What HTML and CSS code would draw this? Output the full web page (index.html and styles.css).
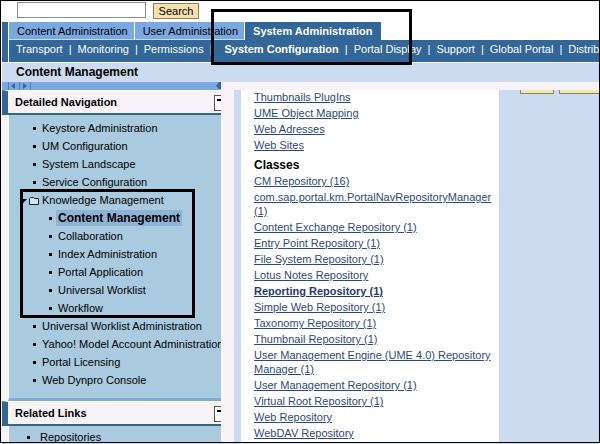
FILE: index.html
```html
<!DOCTYPE html>
<html lang="en">
<head>
  <meta charset="UTF-8" />
  <meta name="viewport" content="width=device-width, initial-scale=1" />
  <title>Content Management</title>
  <link rel="stylesheet" href="styles.css">
</head>
<body>
  <div class="portal">
    <form class="search">
      <input type="text" class="search-text" aria-label="Search" />
      <button type="button" class="search-button">Search</button>
    </form>

    <nav class="top-nav">
      <div class="tabs">
        <a href="#" class="tab">Content Administration</a>
        <a href="#" class="tab">User Administration</a>
        <a href="#" class="tab active">System Administration</a>
      </div>
      <div class="sub-tabs">
        <a href="#">Transport</a>
        <a href="#">Monitoring</a>
        <a href="#">Permissions</a>
        <a href="#" class="active">System Configuration</a>
        <a href="#">Portal Display</a>
        <a href="#">Support</a>
        <a href="#">Global Portal</a>
        <a href="#">Distrib</a>
      </div>
    </nav>

    <h1 class="page-title">Content Management</h1>

    <div class="columns">
      <!-- Left column -->
      <aside class="sidebar">
        <div class="history">
          <svg width="24" height="8" viewBox="0 0 24 8">
            <path d="M0.5 0V8M11.5 0V8M22.5 0V8" stroke="#4c7fb8" />
            <path d="M7 1V7L3 4ZM15 1V7L19 4Z" fill="#336699" />
          </svg>
          <svg width="5" height="8" viewBox="0 0 5 8">
            <path d="M5 0V7H3L0 4L3 0Z" fill="#336699" />
          </svg>
        </div>

        <div class="panel-header">
          <h2>Detailed Navigation</h2>
          <button type="button" class="toggle" aria-label="Collapse"></button>
        </div>
        <ul class="tree">
          <li><a href="#">Keystore Administration</a></li>
          <li><a href="#">UM Configuration</a></li>
          <li><a href="#">System Landscape</a></li>
          <li><a href="#">Service Configuration</a></li>
          <li class="folder">
            <svg class="folder-icon" width="22" height="10" viewBox="0 0 22 10">
              <path d="M0 3H7L3 7Z" fill="#000" />
              <path d="M9.5 8.5V2.5L10.5 1.5H13.5L14.5 2.5H18.5V8.5Z" fill="#d3e4ef" stroke="#222" />
            </svg><a href="#">Knowledge Management</a>
            <ul>
              <li><a href="#" class="selected">Content Management</a></li>
              <li><a href="#">Collaboration</a></li>
              <li><a href="#">Index Administration</a></li>
              <li><a href="#">Portal Application</a></li>
              <li><a href="#">Universal Worklist</a></li>
              <li><a href="#">Workflow</a></li>
            </ul>
          </li>
          <li><a href="#">Universal Worklist Administration</a></li>
          <li><a href="#">Yahoo! Model Account Administration</a></li>
          <li><a href="#">Portal Licensing</a></li>
          <li><a href="#">Web Dynpro Console</a></li>
        </ul>

        <div class="panel-header">
          <h2>Related Links</h2>
          <button type="button" class="toggle" aria-label="Collapse"></button>
        </div>
        <ul class="tree related">
          <li><a href="#">Repositories</a></li>
        </ul>
      </aside>

      <!-- Right column -->
      <main class="content">
        <div class="link-list">
          <ul>
            <li><a href="#">Thumbnails PlugIns</a></li>
            <li><a href="#">UME Object Mapping</a></li>
            <li><a href="#">Web Adresses</a></li>
            <li><a href="#">Web Sites</a></li>
          </ul>
          <h3>Classes</h3>
          <ul>
            <li><a href="#">CM Repository (16)</a></li>
            <li><a href="#">com.sap.portal.km.PortalNavRepositoryManager (1)</a></li>
            <li><a href="#">Content Exchange Repository (1)</a></li>
            <li><a href="#">Entry Point Repository (1)</a></li>
            <li><a href="#">File System Repository (1)</a></li>
            <li><a href="#">Lotus Notes Repository</a></li>
            <li><a href="#" class="current">Reporting Repository (1)</a></li>
            <li><a href="#">Simple Web Repository (1)</a></li>
            <li><a href="#">Taxonomy Repository (1)</a></li>
            <li><a href="#">Thumbnail Repository (1)</a></li>
            <li><a href="#">User Management Engine (UME 4.0) Repository Manager (1)</a></li>
            <li><a href="#">User Management Repository (1)</a></li>
            <li><a href="#">Virtual Root Repository (1)</a></li>
            <li><a href="#">Web Repository</a></li>
            <li><a href="#">WebDAV Repository</a></li>
          </ul>
        </div>
        <div class="actions">
          <button type="button" aria-label="New"></button>
          <button type="button" class="wide" aria-label="Duplicate"></button>
        </div>
      </main>
    </div>

    <div class="marker marker-tab"></div>
    <div class="marker marker-tree"></div>
  </div>
</body>
</html>
```
FILE: styles.css
```css
* {
  box-sizing: border-box;
}

body {
  margin: 0;
  background: #ccdbef;
  font-family: "Liberation Sans", Arial, sans-serif;
  font-size: 11px;
  color: #000;
}

a {
  color: inherit;
  text-decoration: none;
}

ul {
  list-style: none;
  margin: 0;
  padding: 0;
}

h1,
h2,
h3 {
  margin: 0;
  font-size: 11px;
}

.portal {
  position: relative;
  display: flex;
  flex-direction: column;
  height: calc(100vh - 1px);
  border: 1px solid #000;
  background: #fff;
  overflow: hidden;
}

/* search row */
.search {
  display: flex;
  flex: none;
  gap: 7px;
  height: 21px;
  padding: 1px 0 3px 16px;
}

.search-text {
  width: 129px;
  height: 16px;
  padding: 0 2px;
  border: 1px solid #8c8c8c;
  font: inherit;
}

.search-button {
  width: 46px;
  height: 16px;
  margin-top: 1px;
  padding: 0;
  border: 1px solid #8f8158;
  background: #f5e0ae;
  font: inherit;
  line-height: 14px;
}

/* navigation */
.top-nav {
  flex: none;
  margin-left: 1px;
  border-left: 6px solid #336699;
  box-shadow: inset 1px 0 #fff;
}

.tabs,
.sub-tabs {
  display: flex;
  margin-left: 1px;
  white-space: nowrap;
}

.tab {
  height: 18px;
  padding: 0 6px 0 8px;
  border-right: 1px solid #fff;
  border-bottom: 1px solid #c5daf3;
  background: #7aa8e0;
  line-height: 18px;
}

.tab.active {
  padding-right: 8px;
  border-color: #336699;
  background: #336699;
  color: #fff;
  font-weight: bold;
}

.sub-tabs {
  height: 22px;
  padding-left: 7px;
  background: #336699;
  color: #fff;
  line-height: 19px;
}

.sub-tabs a + a::before {
  content: "|";
  padding: 0 6px;
  font-weight: normal;
}

.sub-tabs a.active {
  font-weight: bold;
}

.sub-tabs a.active::before {
  padding-right: 12px;
}

.page-title {
  flex: none;
  height: 20px;
  margin-left: 1px;
  padding-left: 14px;
  border-top: 1px solid #f4f3fa;
  background: #ccdbef;
  font-size: 12px;
  line-height: 19px;
}

.columns {
  display: flex;
  flex: 1;
  min-height: 0;
  background: #f8f3f8;
}

/* sidebar */
.sidebar {
  flex: none;
  width: 220px;
  padding-left: 1px;
  overflow: hidden;
}

.history {
  display: flex;
  justify-content: space-between;
  height: 8px;
  padding-left: 6px;
  background: #7aa8e0;
}

.panel-header {
  display: flex;
  justify-content: space-between;
  height: 25px;
  padding-left: 7px;
  border-top: 1px solid #fff;
  border-left: 6px solid #336699;
  border-bottom: 2px solid #336688;
  background: #f8f3f7;
  line-height: 22px;
}

.toggle {
  width: 7px;
  height: 16px;
  margin-top: 4px;
  padding: 0;
  border: 1px solid #555;
  border-right: 0;
  background: linear-gradient(#000, #000) 2px 3px / 4px 2px no-repeat #fff;
}

.tree {
  margin-left: 6px;
  padding: 4px 0 9px;
  border-left: 1px solid #fff;
  border-bottom: 3px solid #86a9d0;
  background: #a9cadf;
  line-height: 18px;
  white-space: nowrap;
}

.tree li {
  padding-left: 33px;
}

.tree li:not(.folder)::before {
  content: "";
  display: inline-block;
  width: 3px;
  height: 3px;
  margin: 0 6px 2px -9px;
  background: #000;
}

.tree .folder-icon {
  margin-left: -22px;
  vertical-align: middle;
}

.tree li li {
  padding-left: 16px;
}

.tree .selected {
  padding: 1px 2px;
  margin-left: -2px;
  background: #8fb3d6;
  font-size: 12px;
  font-weight: bold;
}

.tree.related {
  padding-top: 2px;
}

.tree.related li {
  padding-left: 31px;
}

.tree.related li::before {
  margin-left: -13px;
  margin-right: 10px;
}

/* content area */
.content {
  display: flex;
  flex: 1;
  align-items: stretch;
  min-width: 0;
  margin: 8px 0 0 13px;
  border-left: 7px solid #ccdbef;
  background: #ccdbef;
}

.link-list {
  flex: none;
  width: 258px;
  padding-left: 13px;
  background: #fff;
}

.link-list li {
  margin-bottom: 2px;
  line-height: 14px;
}

.link-list a {
  color: #2d4a78;
  text-decoration: underline;
}

.link-list .current {
  color: #1f3a70;
  font-weight: bold;
}

.link-list h3 {
  margin: 6px 0 1px;
  font-size: 12px;
  line-height: 15px;
}

.actions {
  display: flex;
  align-items: flex-start;
  flex: 1;
  gap: 5px;
  padding-left: 21px;
  overflow: hidden;
}

.actions button {
  flex: none;
  width: 34px;
  height: 4px;
  padding: 0;
  border: 1px solid #8f8158;
  border-top: 0;
  background: #f3e8b4;
}

.actions .wide {
  width: 60px;
}

/* highlight frames drawn over the page */
.marker {
  position: absolute;
  border: 3px solid #000;
  pointer-events: none;
}

.marker-tab {
  top: 8px;
  left: 210px;
  width: 201px;
  height: 56px;
}

.marker-tree {
  top: 188px;
  left: 19px;
  width: 175px;
  height: 129px;
}
```
